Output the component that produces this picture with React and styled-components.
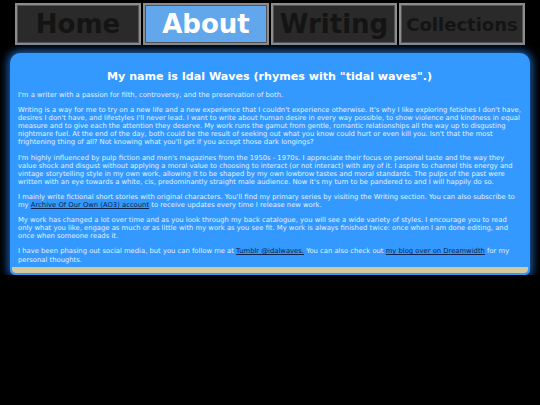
import React from "react";
import styled, { createGlobalStyle } from "styled-components";

const GlobalStyle = createGlobalStyle`
  body {
    margin: 0;
    background-color: #000;
    font-family: Verdana, "DejaVu Sans", sans-serif;
  }
`;

const Page = styled.div`
  display: flex;
  flex-direction: column;
  align-items: center;
  padding-top: 3px;
`;

const Nav = styled.nav`
  display: flex;
  gap: 2px;
`;

const NavItem = styled.a`
  display: flex;
  align-items: center;
  justify-content: center;
  box-sizing: border-box;
  width: 126px;
  height: 42px;
  border: 2px solid #8c8c8c;
  background-color: ${(p) => (p.active ? "#62a6ec" : "#2a2a2a")};
  color: ${(p) => (p.active ? "#fff" : "#141414")};
  font-family: Verdana, "DejaVu Sans", sans-serif;
  font-weight: bold;
  font-size: ${(p) => (p.small ? "18px" : "26px")};
  text-decoration: none;
  box-shadow: inset 0 0 0 1px #555;
`;

const Panel = styled.main`
  box-sizing: border-box;
  width: 520px;
  margin-top: 8px;
  background-color: #3399ff;
  border: 2px solid #3399ff;
  border-radius: 10px 10px 5px 5px;
  box-shadow: 0 0 8px 2px #1d64b8;
  overflow: hidden;
`;

const Body = styled.div`
  padding: 14px 7px 3px 6px;
  color: #e4f1ff;
  font-size: 6.8px;
  line-height: 8.1px;
`;

const Title = styled.h1`
  margin: 0 0 6px;
  text-align: center;
  color: #fff;
  font-size: 11.1px;
  line-height: 16px;
`;

const Para = styled.p`
  margin: 0 0 7px;

  &:last-child {
    margin-bottom: 0;
  }
`;

const Link = styled.a`
  color: #0b2450;
  text-decoration: underline;
`;

const Footer = styled.div`
  height: 6px;
  background-color: #d6c898;
  border-radius: 0 0 4px 4px;
`;

const links = [
  { label: "Home" },
  { label: "About", active: true },
  { label: "Writing" },
  { label: "Collections", small: true },
];

export default function App() {
  return (
    <Page>
      <GlobalStyle />
      <Nav>
        {links.map((l) => (
          <NavItem key={l.label} href="#" active={l.active} small={l.small}>
            {l.label}
          </NavItem>
        ))}
      </Nav>
      <Panel>
        <Body>
          <Title>My name is Idal Waves (rhymes with "tidal waves".)</Title>
          <Para>
            I'm a writer with a passion for filth, controversy, and the
            preservation of both.
          </Para>
          <Para>
            Writing is a way for me to try on a new life and a new experience
            that I couldn't experience otherwise. It's why I like exploring
            fetishes I don't have, desires I don't have, and lifestyles I'll
            never lead. I want to write about human desire in every way
            possible, to show violence and kindness in equal measure and to give
            each the attention they deserve. My work runs the gamut from gentle,
            romantic relationships all the way up to disgusting nightmare fuel.
            At the end of the day, both could be the result of seeking out what
            you know could hurt or even kill you. Isn't that the most
            frightening thing of all? Not knowing what you'll get if you accept
            those dark longings?
          </Para>
          <Para>
            I'm highly influenced by pulp fiction and men's magazines from the
            1950s - 1970s. I appreciate their focus on personal taste and the way
            they value shock and disgust without applying a moral value to
            choosing to interact (or not interact) with any of it. I aspire to
            channel this energy and vintage storytelling style in my own work,
            allowing it to be shaped by my own lowbrow tastes and moral
            standards. The pulps of the past were written with an eye towards a
            white, cis, predominantly straight male audience. Now it's my turn to
            be pandered to and I will happily do so.
          </Para>
          <Para>
            I mainly write fictional short stories with original characters.
            You'll find my primary series by visiting the Writing section. You
            can also subscribe to my{" "}
            <Link href="#">Archive Of Our Own (AO3) account</Link> to receive
            updates every time I release new work.
          </Para>
          <Para>
            My work has changed a lot over time and as you look through my back
            catalogue, you will see a wide variety of styles. I encourage you to
            read only what you like, engage as much or as little with my work as
            you see fit. My work is always finished twice: once when I am done
            editing, and once when someone reads it.
          </Para>
          <Para>
            I have been phasing out social media, but you can follow me at{" "}
            <Link href="#">Tumblr @idalwaves.</Link> You can also check out{" "}
            <Link href="#">my blog over on Dreamwidth</Link> for my personal
            thoughts.
          </Para>
        </Body>
        <Footer />
      </Panel>
    </Page>
  );
}
